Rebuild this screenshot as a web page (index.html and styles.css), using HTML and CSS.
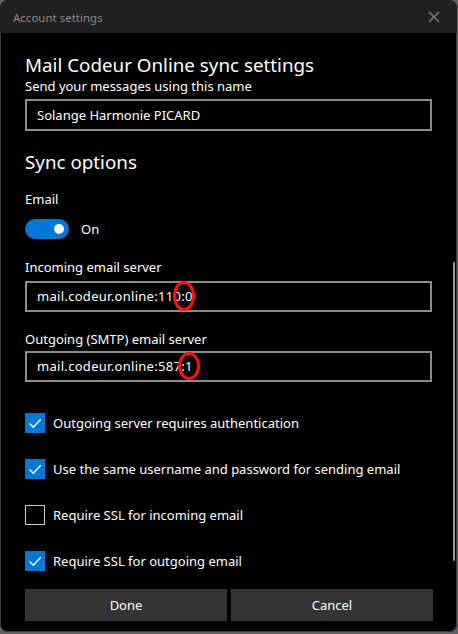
FILE: index.html
```html
<!DOCTYPE html>
<html>
<head>
<meta charset="utf-8">
<link rel="stylesheet" href="styles.css">
</head>
<body>
<div class="window">
  <div class="titlebar">
    <span class="title">Account settings</span>
    <svg class="close" width="12" height="12" viewBox="0 0 12 12"><path d="M1 1L11 11M11 1L1 11" stroke="#8a8a8a" stroke-width="1.2" fill="none"/></svg>
  </div>
  <div class="content">
    <h1 class="h1">Mail Codeur Online sync settings</h1>
    <div class="label first">Send your messages using this name</div>
    <div class="input name">Solange Harmonie PICARD</div>

    <h2 class="h2">Sync options</h2>
    <div class="label email">Email</div>
    <div class="toggle-row">
      <span class="toggle"><span class="knob"></span></span>
      <span class="toggle-text">On</span>
    </div>

    <div class="label incoming">Incoming email server</div>
    <div class="input mark-wrap in1">mail.codeur.online:110:0
      <svg class="mark m1" width="26" height="34" viewBox="0 0 26 34"><ellipse cx="13" cy="17" rx="9.5" ry="13.5" stroke="#ff1010" stroke-width="3" fill="none"/></svg>
    </div>

    <div class="label outgoing">Outgoing (SMTP) email server</div>
    <div class="input mark-wrap in2">mail.codeur.online:587:1
      <svg class="mark m2" width="26" height="34" viewBox="0 0 26 34"><ellipse cx="13" cy="17" rx="9.5" ry="12.5" stroke="#ff1010" stroke-width="3" fill="none"/></svg>
    </div>

    <div class="checks">
      <div class="check-row"><span class="box on"><svg width="20" height="20" viewBox="0 0 20 20"><path d="M4.5 10.5L8.3 14.3L15.8 6.3" stroke="#fff" stroke-width="1.4" fill="none"/></svg></span><span>Outgoing server requires authentication</span></div>
      <div class="check-row"><span class="box on"><svg width="20" height="20" viewBox="0 0 20 20"><path d="M4.5 10.5L8.3 14.3L15.8 6.3" stroke="#fff" stroke-width="1.4" fill="none"/></svg></span><span>Use the same username and password for sending email</span></div>
      <div class="check-row"><span class="box off"></span><span>Require SSL for incoming email</span></div>
      <div class="check-row"><span class="box on"><svg width="20" height="20" viewBox="0 0 20 20"><path d="M4.5 10.5L8.3 14.3L15.8 6.3" stroke="#fff" stroke-width="1.4" fill="none"/></svg></span><span>Require SSL for outgoing email</span></div>
    </div>

    <div class="buttons">
      <button class="btn">Done</button>
      <button class="btn">Cancel</button>
    </div>
  </div>
  <div class="scrollbar"></div>
</div>
</body>
</html>
```
FILE: styles.css
```css
* { box-sizing: border-box; }
html, body { margin: 0; padding: 0; }
body {
  background: #5e6266;
  width: 458px;
  height: 634px;
  overflow: hidden;
  font-family: "Noto Sans", "Open Sans", sans-serif;
  color: #ffffff;
}
.window {
  position: relative;
  width: 457px;
  height: 632px;
  background: #000;
  border-radius: 8px;
  overflow: hidden;
  box-shadow: inset 0 0 0 1px #3a3a3a;
}
.titlebar {
  height: 33px;
  background: #202020;
  display: flex;
  align-items: center;
  justify-content: space-between;
  padding: 0 17px 0 13px;
  border-radius: 8px 8px 0 0;
}
.title {
  font-size: 11.5px;
  color: #8b8b8b;
  margin-top: 1px;
}
.close { margin-top: 1px; }
.content {
  padding: 0 24px 0 25px;
}
.h1 {
  font-weight: 400;
  font-size: 18.8px;
  line-height: 26px;
  margin: 19px 0 0 0;
}
.label {
  font-size: 13px;
  line-height: 20px;
  color: #fff;
}
.label.first { margin-top: -2px; }
.input {
  width: 407px;
  height: 32px;
  border: 2px solid #8c8c8c;
  font-size: 13px;
  line-height: 28px;
  padding-left: 10px;
  color: #fff;
}
.input.name { margin-top: 3px; }
.mark-wrap { position: relative; height: 31px; line-height: 27px; letter-spacing: 0.3px; }
.mark { position: absolute; }
.m1 { left: 144px; top: -4px; }
.m2 { left: 149px; top: -4px; }
.h2 {
  font-weight: 400;
  font-size: 18.8px;
  line-height: 26px;
  margin: 18px 0 0 0;
}
.label.email { margin-top: 14px; }
.toggle-row {
  display: flex;
  align-items: center;
  margin: 10px 0 0 0;
  height: 20px;
}
.toggle {
  width: 44px;
  height: 20px;
  border-radius: 10px;
  background: #0078d4;
  position: relative;
  display: inline-block;
}
.knob {
  position: absolute;
  width: 10px;
  height: 10px;
  border-radius: 50%;
  background: #fff;
  right: 5px;
  top: 5px;
}
.toggle-text {
  font-size: 13px;
  margin-left: 12px;
}
.label.incoming { margin-top: 18px; }
.input.in1 { margin-top: 4px; }
.label.outgoing { margin-top: 17px; }
.input.in2 { margin-top: 2px; }
.checks {
  margin: 31px 0 0 0;
  display: flex;
  flex-direction: column;
  gap: 26px;
}
.check-row {
  display: flex;
  align-items: center;
  height: 20px;
  font-size: 13px;
}
.box {
  width: 20px;
  height: 20px;
  margin-right: 8px;
  display: inline-block;
  flex: none;
}
.box svg { display: block; }
.box.on { background: #0078d4; }
.box.off { border: 1.5px solid #cfcfcf; }
.buttons {
  display: flex;
  gap: 4px;
  margin: 18px 0 0 0;
  width: 408px;
}
.btn {
  flex: 1;
  height: 32px;
  border: none;
  background: #333333;
  color: #fff;
  font-family: "Noto Sans", "Open Sans", sans-serif;
  font-size: 13px;
  padding: 0;
}
.scrollbar {
  position: absolute;
  right: 2px;
  top: 262px;
  width: 2px;
  height: 299px;
  background: #9a9a9a;
  border-radius: 1px;
}
```
